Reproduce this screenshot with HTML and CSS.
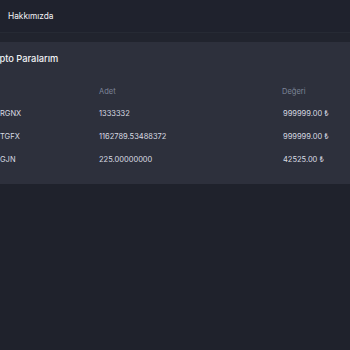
FILE: index.html
```html
<!DOCTYPE html>
<html lang="tr">
<head>
<meta charset="utf-8">
<link rel="stylesheet" href="styles.css">
</head>
<body>
<nav class="nav"><span class="nav-link">Hakkımızda</span></nav>
<div class="strip"></div>
<section class="card">
  <h2 class="title">Kripto Paralarım</h2>
  <div class="table">
    <div class="row head"><span></span><span>Adet</span><span>Değeri</span></div>
    <div class="row"><span>RGNX</span><span>1333332</span><span class="val">999999.00 ₺</span></div>
    <div class="row"><span>TGFX</span><span>1162789.53488372</span><span class="val">999999.00 ₺</span></div>
    <div class="row"><span>GJN</span><span>225.00000000</span><span class="val">42525.00 ₺</span></div>
  </div>
</section>
</body>
</html>
```
FILE: styles.css
```css
html, body { margin: 0; padding: 0; }
body {
  background: #1f222c;
  font-family: Inter, "Noto Sans", sans-serif;
  color: #e4e6ec;
  width: 350px;
  height: 350px;
  overflow: hidden;
}
.nav {
  height: 32px;
  display: flex;
  align-items: center;
  padding-left: 8px;
  background: #1f222d;
}
.nav-link { font-size: 8.3px; color: #f2f3f6; }
.strip {
  height: 9px;
  background: #21242e;
  border-top: 1px solid #262a34;
}
.card {
  background: #2d303c;
  height: 142px;
  box-sizing: border-box;
  padding-top: 10px;
}
.title {
  margin: 0 0 0 -13px;
  font-size: 9.3px;
  font-weight: 500;
  line-height: 14px;
  color: #f1f2f5;
}
.table { margin-top: 20px; }
.row {
  display: grid;
  grid-template-columns: 99px 183px 1fr;
  height: 23px;
  align-items: center;
  font-size: 7.5px;
  color: #d8dbe2;
}
.row.head { color: #7d8598; height: 11px; margin-bottom: 5px; }
.val { padding-left: 1px; }
```
